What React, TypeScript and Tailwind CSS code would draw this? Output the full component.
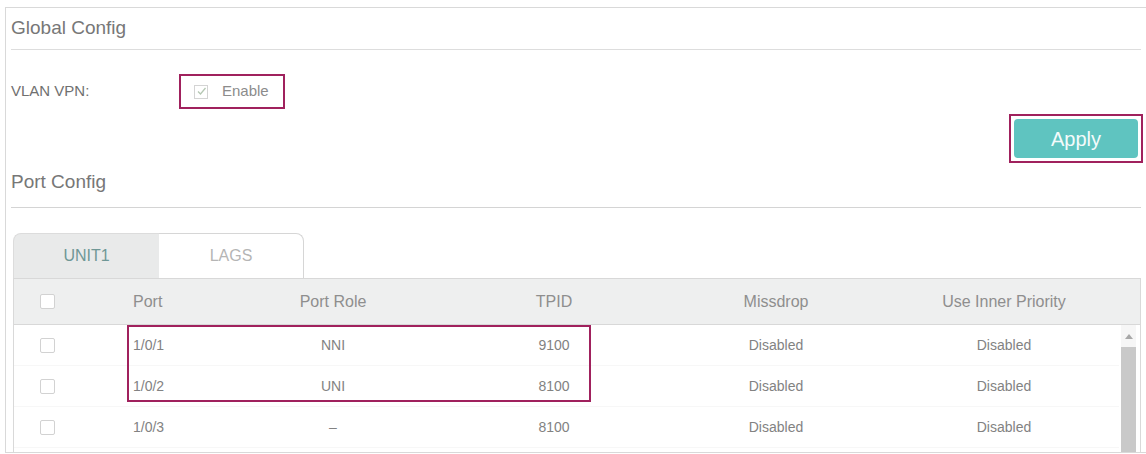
import React from "react";

const MAG = "border-[#a0215d]";

function Box({ className = "" }: { className?: string }) {
  return <div className={`w-[15px] h-[15px] border border-[#d2d2d2] rounded-[2px] bg-white ${className}`} />;
}

const rows = [
  { port: "1/0/1", role: "NNI", tpid: "9100" },
  { port: "1/0/2", role: "UNI", tpid: "8100" },
  { port: "1/0/3", role: "–", tpid: "8100" },
];

export default function App() {
  return (
    <div
      className="w-[1146px] h-[454px] bg-white overflow-hidden relative"
      style={{ fontFamily: '"Liberation Sans", Arial, sans-serif' }}
    >
      <div className="ml-[5px] mt-[7px] h-[446px] border-l border-t border-b border-[#d9d9d9] pl-[5px] pr-[5px] flex flex-col">
        {/* Global Config */}
        <div className="h-[42px] shrink-0 flex items-center border-b border-[#dddddd] text-[19px] text-[#777777]">
          Global Config
        </div>

        {/* VLAN VPN */}
        <div className="mt-[24px] h-[35px] shrink-0 flex items-center">
          <div className="w-[168px] text-[15px] text-[#707070]">VLAN VPN:</div>
          <div className={`w-[106px] h-[35px] border-2 ${MAG} flex items-center pl-[13px]`}>
            <div className="w-[14px] h-[14px] border border-[#d4d4d4] flex items-center justify-center">
              <svg width="11" height="11" viewBox="0 0 11 11">
                <path d="M2 5.5 L4.5 8 L9.5 2" fill="none" stroke="#b5c7b3" strokeWidth="1.3" />
              </svg>
            </div>
            <span className="ml-[14px] text-[15px] text-[#8c8c8c]">Enable</span>
          </div>
        </div>

        {/* Apply */}
        <div className="mt-[5px] h-[49px] shrink-0 flex justify-end">
          <div className={`w-[134px] h-[49px] border-2 ${MAG} mr-[-2px] p-[3px]`}>
            <div className="w-full h-full rounded-[4px] bg-[#5fc4c0] flex items-center justify-center text-[#f4fbfb] text-[20px]">
              Apply
            </div>
          </div>
        </div>

        {/* Port Config */}
        <div className="h-[45px] shrink-0 flex items-center pb-[5px] border-b border-[#d4d4d4] text-[19px] text-[#777777]">
          Port Config
        </div>

        {/* Table */}
        <div className="mt-[25px] ml-[2px] flex-1 min-h-0 flex flex-col">
          <div className="h-[45px] shrink-0 flex">
            <div className="w-[146px] bg-[#e9eaea] rounded-tl-[8px] border-l border-t border-[#dcdcdc] flex items-center justify-center text-[16px] text-[#6f9796]">
              UNIT1
            </div>
            <div className="w-[145px] bg-white rounded-tr-[8px] border-t border-r border-[#d6d6d6] flex items-center justify-center text-[16px] text-[#b5b5b5]">
              LAGS
            </div>
          </div>
          <div className="flex-1 min-h-0 flex flex-col border-l border-r border-[#d9d9d9]">
            <div className="h-[47px] shrink-0 flex items-center bg-[#eeefef] border-t border-b border-[#d8d8d8] text-[16px] text-[#8e8e8e]">
              <div className="w-[113px] pl-[26px]">
                <Box />
              </div>
              <div className="w-[94px] pl-[6px]">Port</div>
              <div className="w-[224px] text-center">Port Role</div>
              <div className="w-[218px] text-center">TPID</div>
              <div className="w-[226px] text-center">Missdrop</div>
              <div className="w-[230px] text-center">Use Inner Priority</div>
            </div>
            <div className="flex-1 min-h-0 flex relative">
              <div className="flex-1 flex flex-col">
                {rows.map((r) => (
                  <div
                    key={r.port}
                    className="h-[41px] shrink-0 flex items-center border-b border-[#f7f7f7] text-[14px] text-[#828282]"
                  >
                    <div className="w-[113px] pl-[26px]">
                      <Box />
                    </div>
                    <div className="w-[94px] pl-[6px]">{r.port}</div>
                    <div className="w-[224px] text-center">{r.role}</div>
                    <div className="w-[218px] text-center">{r.tpid}</div>
                    <div className="w-[226px] text-center">Disabled</div>
                    <div className="w-[230px] text-center">Disabled</div>
                  </div>
                ))}
              </div>
              <div className="w-[22px] shrink-0 pl-[2px] pr-[5px] flex flex-col">
                <div className="h-[22px] flex items-center justify-center bg-[#f6f6f6]">
                  <svg width="8" height="5" viewBox="0 0 8 5">
                    <path d="M0 5 L4 0 L8 5 Z" fill="#a8a8a8" />
                  </svg>
                </div>
                <div className="flex-1 bg-[#c9c9c9]" />
              </div>
              <div className={`absolute left-[113px] top-0 w-[464px] h-[77px] border-2 ${MAG} pointer-events-none`} />
            </div>
          </div>
        </div>
      </div>
    </div>
  );
}
